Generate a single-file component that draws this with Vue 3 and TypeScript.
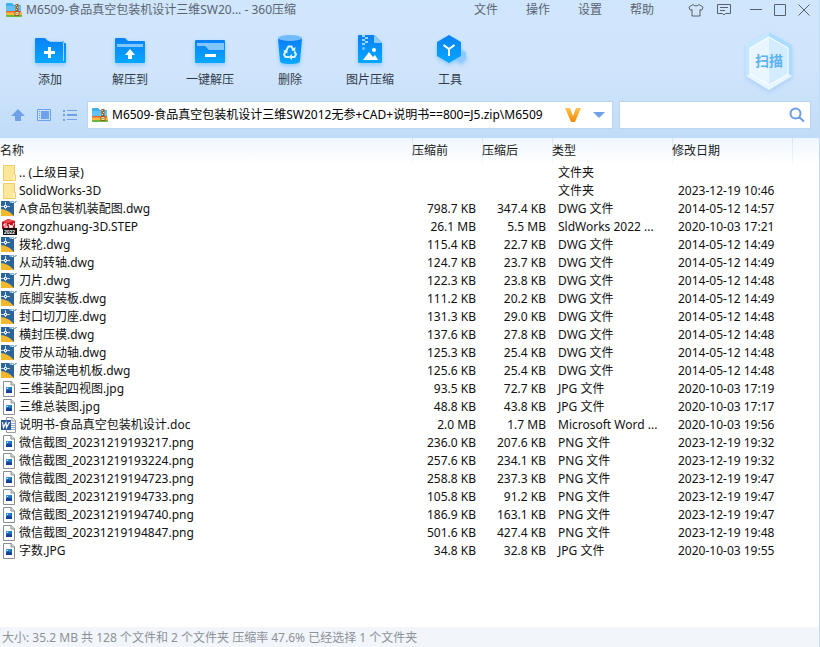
<script setup lang="ts">
import { ref } from 'vue'

type Kind = 'folder' | 'dwg' | 'step' | 'image' | 'doc'

interface Entry {
  name: string
  kind: Kind
  size: string
  packed: string
  type: string
  date: string
}

const row = (name: string, kind: Kind, size: string, packed: string, type: string, date: string): Entry =>
  ({ name, kind, size, packed, type, date })

const title = 'M6509-食品真空包装机设计三维SW20... - 360压缩'
const path = ref('M6509-食品真空包装机设计三维SW2012无参+CAD+说明书==800=J5.zip\\M6509')
const query = ref('')
const menus = ['文件', '操作', '设置', '帮助']
const tools = [
  { id: 'add', label: '添加' },
  { id: 'extract', label: '解压到' },
  { id: 'quick', label: '一键解压' },
  { id: 'delete', label: '删除' },
  { id: 'picture', label: '图片压缩' },
  { id: 'tools', label: '工具' },
]

const entries: Entry[] = [
  row('.. (上级目录)', 'folder', '', '', '文件夹', ''),
  row('SolidWorks-3D', 'folder', '', '', '文件夹', '2023-12-19 10:46'),
  row('A食品包装机装配图.dwg', 'dwg', '798.7 KB', '347.4 KB', 'DWG 文件', '2014-05-12 14:57'),
  row('zongzhuang-3D.STEP', 'step', '26.1 MB', '5.5 MB', 'SldWorks 2022 ...', '2020-10-03 17:21'),
  row('拨轮.dwg', 'dwg', '115.4 KB', '22.7 KB', 'DWG 文件', '2014-05-12 14:49'),
  row('从动转轴.dwg', 'dwg', '124.7 KB', '23.7 KB', 'DWG 文件', '2014-05-12 14:49'),
  row('刀片.dwg', 'dwg', '122.3 KB', '23.8 KB', 'DWG 文件', '2014-05-12 14:48'),
  row('底脚安装板.dwg', 'dwg', '111.2 KB', '20.2 KB', 'DWG 文件', '2014-05-12 14:49'),
  row('封口切刀座.dwg', 'dwg', '131.3 KB', '29.0 KB', 'DWG 文件', '2014-05-12 14:48'),
  row('横封压模.dwg', 'dwg', '137.6 KB', '27.8 KB', 'DWG 文件', '2014-05-12 14:48'),
  row('皮带从动轴.dwg', 'dwg', '125.3 KB', '25.4 KB', 'DWG 文件', '2014-05-12 14:48'),
  row('皮带输送电机板.dwg', 'dwg', '125.6 KB', '25.4 KB', 'DWG 文件', '2014-05-12 14:48'),
  row('三维装配四视图.jpg', 'image', '93.5 KB', '72.7 KB', 'JPG 文件', '2020-10-03 17:19'),
  row('三维总装图.jpg', 'image', '48.8 KB', '43.8 KB', 'JPG 文件', '2020-10-03 17:17'),
  row('说明书-食品真空包装机设计.doc', 'doc', '2.0 MB', '1.7 MB', 'Microsoft Word ...', '2020-10-03 19:56'),
  row('微信截图_20231219193217.png', 'image', '236.0 KB', '207.6 KB', 'PNG 文件', '2023-12-19 19:32'),
  row('微信截图_20231219193224.png', 'image', '257.6 KB', '234.1 KB', 'PNG 文件', '2023-12-19 19:32'),
  row('微信截图_20231219194723.png', 'image', '258.8 KB', '237.3 KB', 'PNG 文件', '2023-12-19 19:47'),
  row('微信截图_20231219194733.png', 'image', '105.8 KB', '91.2 KB', 'PNG 文件', '2023-12-19 19:47'),
  row('微信截图_20231219194740.png', 'image', '186.9 KB', '163.1 KB', 'PNG 文件', '2023-12-19 19:47'),
  row('微信截图_20231219194847.png', 'image', '501.6 KB', '427.4 KB', 'PNG 文件', '2023-12-19 19:48'),
  row('字数.JPG', 'image', '34.8 KB', '32.8 KB', 'JPG 文件', '2020-10-03 19:55'),
]
</script>

<template>
  <div class="app">
    <!-- Gradients and the archive glyph shared by the icons -->
    <svg class="defs" width="0" height="0" aria-hidden="true">
      <defs>
        <linearGradient id="blue" x1="0" y1="0" x2="0" y2="1">
          <stop offset="0" stop-color="#0a80f5" />
          <stop offset="1" stop-color="#06a8ff" />
        </linearGradient>
        <linearGradient id="gold" x1="0" y1="0" x2="0" y2="1">
          <stop offset="0" stop-color="#fbc44c" />
          <stop offset="1" stop-color="#f28a08" />
        </linearGradient>
        <linearGradient id="thumb" x1="0" y1="0" x2="1" y2="1">
          <stop offset="0" stop-color="#35b0ee" />
          <stop offset="1" stop-color="#123f9c" />
        </linearGradient>
        <symbol id="archive" viewBox="0 0 16 14">
          <path d="M0 1q0-1 1-1h5l2 2h6q1 0 1 1v6H0z" fill="#3fb0ee" />
          <path d="M0 3h15v5H0z" fill="#62c2f4" />
          <path d="M0 8h15v2H0z" fill="#e8663f" />
          <path d="M0 9.500h16v2.500H0z" fill="#f6bb3a" />
          <path d="M0 12h16v1q0 1-1 1H1q-1 0-1-1z" fill="#6fb43c" />
          <path d="M9.500 1h3v12h-3z" fill="#a0622a" />
          <path d="M10 2h1v1h-1zm1 2h1v1h-1zm-1 2h1v1h-1z" fill="#f9d57c" />
          <path d="M9 8.500h4v4H9z" fill="#fbe9b8" stroke="#9a5a20" />
          <path d="M10.500 10h1v1h-1z" fill="#6d3a10" />
        </symbol>
      </defs>
    </svg>

    <header class="top">
      <div class="titlebar">
        <svg class="archive" aria-hidden="true"><use href="#archive" /></svg>
        <h1 class="title">{{ title }}</h1>
        <nav class="menus">
          <button v-for="m in menus" :key="m" type="button">{{ m }}</button>
        </nav>
        <div class="window-tools">
          <button type="button" aria-label="皮肤">
            <svg width="16" height="14" viewBox="0 0 16 14"><path d="M5 1.500.9 4.200l1.400 3L4 6.500V13h8V6.500l1.700.7 1.400-3L11 1.500C10 3.300 6 3.300 5 1.500z" /></svg>
          </button>
          <button type="button" aria-label="反馈">
            <svg width="14" height="12" viewBox="0 0 14 12"><path d="M.5.5h13v9H8.500L7 11 5.500 9.500h-5zM3 3.500h8M3 6.500h5" /></svg>
          </button>
        </div>
        <div class="window-controls">
          <button type="button" aria-label="最小化">
            <svg width="12" height="12" viewBox="0 0 12 12"><path d="M0 5.500h12" /></svg>
          </button>
          <button type="button" aria-label="最大化">
            <svg width="12" height="12" viewBox="0 0 12 12"><path d="M.5.5h11v11H.5z" /></svg>
          </button>
          <button type="button" aria-label="关闭">
            <svg width="12" height="12" viewBox="0 0 12 12"><path d="m.5.5 11 11m0-11-11 11" /></svg>
          </button>
        </div>
      </div>

      <div class="toolbar">
        <button v-for="t in tools" :key="t.id" type="button" class="tool">
          <svg width="32" height="30" viewBox="0 0 32 30" aria-hidden="true">
            <g v-if="t.id === 'add'">
              <path d="M1 4q0-1 1-1h9l3 3h15q1 0 1 1v1h1q1 0 1 1v18q0 1-1 1H2q-1 0-1-1z" fill="url(#blue)" />
              <path d="M15 6h13q2 0 2 2v18h-1V8q0-1-1-1H16z" fill="#9bd4ff" />
              <path d="M14 12h3v4h4v3h-4v4h-3v-4h-4v-3h4z" fill="#fff" />
            </g>
            <g v-else-if="t.id === 'extract'">
              <path d="M1 4q0-1 1-1h9l3 3h16q1 0 1 1v20q0 1-1 1H2q-1 0-1-1z" fill="url(#blue)" />
              <path d="M3 9h26v3H3z" fill="#82c8ff" />
              <path d="m16 14 5 6h-3v4h-4v-4h-3z" fill="#fff" />
            </g>
            <g v-else-if="t.id === 'quick'">
              <rect x="1" y="5" width="30" height="23" rx="1" fill="url(#blue)" />
              <path d="M3 8h27v7H15l-4-4H3z" fill="#80c6ff" />
              <path d="M11 19h11v3H11z" fill="#fff" />
            </g>
            <g v-else-if="t.id === 'delete'">
              <path d="M4 4h24l-2 22q0 3-10 3T6 26z" fill="url(#blue)" />
              <ellipse cx="16" cy="3" rx="12" ry="3" fill="#72bcfa" />
              <g fill="none" stroke="#d9f3ff" stroke-width="2">
                <path d="m12.500 15 2-3.500h3l2 3.500M20.500 16.500l1.500 3-1.500 2.500H17M15 22h-3.500L10 19.500l2-3.500" />
              </g>
              <path d="m21.500 12-.5 4.500-4-1.500zM18 19v6l-3.500-3zM9 16l4.500-2v4.500z" fill="#d9f3ff" />
            </g>
            <g v-else-if="t.id === 'picture'">
              <path d="M4 1q0-1 1-1h15l8 8v19q0 1-1 1H5q-1 0-1-1z" fill="url(#blue)" />
              <path d="M20 0v7q0 1 1 1h7z" fill="#8ccaff" />
              <path d="M8 0h3v2H8zm3 2h3v2h-3zM8 4h3v2H8zm3 2h3v2h-3zM8 8h3v2H8z" fill="#9bd4ff" />
              <circle cx="9.500" cy="13.500" r="1.500" fill="#67c3ff" />
              <circle cx="20" cy="15" r="2" fill="#fff" />
              <path d="m9 25 6-8 4 5 2-2 3 5z" fill="#fff" />
            </g>
            <g v-else>
              <path d="m28 15 4 2v7l-5 4-5-3z" fill="#8ccaff" />
              <path d="m15 0 12 7v14l-12 7L3 21V7z" fill="url(#blue)" />
              <path d="m9.500 10 5.500 4 5.500-4m-5.500 4v7" fill="none" stroke="#fff" stroke-width="2" />
            </g>
          </svg>
          <span>{{ t.label }}</span>
        </button>
        <button type="button" class="scan">
          <svg class="shield" viewBox="0 0 48 58" aria-hidden="true">
            <path d="m24 0 23 13v31L24 58 1 44V13z" fill="#d3edff" />
            <path d="m24 0 23 13v31l-4-2V16L24 5z" fill="#acdcff" />
            <path d="m1 44 4-2 19 11 19-11 4 2-23 14z" fill="#e6f5ff" />
            <path d="M1 13 24 0v5L5 16v26l-4 2z" fill="#c3e8ff" />
            <path d="M24 5 5 16v26l19 11z" fill="#eaf6ff" />
            <path d="m24 5 19 11v26L24 53z" fill="#d4ecff" />
            <path d="m24 5 19 11v26L24 53 5 42V16z" fill="none" stroke="#fff" />
          </svg>
          <span class="scan-label">扫描</span>
        </button>
      </div>

      <div class="location">
        <div class="nav-buttons">
          <button type="button" aria-label="上级目录">
            <svg width="14" height="14" viewBox="0 0 14 14"><path d="m7 1 7 7h-4v5H4V8H0z" fill="#6fa1e9" /></svg>
          </button>
          <button type="button" aria-label="预览">
            <svg width="14" height="12" viewBox="0 0 14 12"><path d="M.5.5h13v11H.5z" fill="none" stroke="#6fa1e9" /><path d="M2 2h1v1H2zm0 2h1v1H2zm0 2h1v1H2zm0 2h1v1H2zM4 2h8v8H4z" fill="#6fa1e9" /></svg>
          </button>
          <button type="button" aria-label="列表">
            <svg width="14" height="12" viewBox="0 0 14 12"><path d="M0 1h2v2H0zm4 0h10v1H4zM0 5h2v2H0zm4 0h10v2H4zM0 10h2v2H0zm4 0h10v1H4z" fill="#6fa1e9" /></svg>
          </button>
        </div>
        <div class="address">
          <svg class="archive" aria-hidden="true"><use href="#archive" /></svg>
          <input v-model="path" type="text" aria-label="路径" />
          <svg class="vip" width="16" height="16" viewBox="0 0 16 16" aria-hidden="true"><path d="M0 1h5l3 8 3-8h5l-6 14H6z" fill="url(#gold)" /></svg>
          <button type="button" aria-label="历史路径">
            <svg width="12" height="6" viewBox="0 0 12 6"><path d="M0 0h12L6 6z" fill="#6fa1e9" /></svg>
          </button>
        </div>
        <div class="search">
          <input v-model="query" type="search" aria-label="搜索" />
          <button type="button" aria-label="搜索">
            <svg width="16" height="16" viewBox="0 0 16 16"><path d="M11.500 6.500a5 5 0 1 1-10 0 5 5 0 0 1 10 0zM10 10l5 4.500" fill="none" stroke="#6f9fe3" stroke-width="2" /></svg>
          </button>
        </div>
      </div>
    </header>

    <main class="files">
      <table>
        <colgroup>
          <col />
          <col class="c-size" />
          <col class="c-size" />
          <col class="c-wide" />
          <col class="c-wide" />
          <col class="c-rest" />
        </colgroup>
        <thead>
          <tr>
            <th>名称</th>
            <th>压缩前</th>
            <th>压缩后</th>
            <th>类型</th>
            <th>修改日期</th>
            <td></td>
          </tr>
        </thead>
        <tbody>
          <tr v-for="e in entries" :key="e.name">
            <td class="name">
              <div class="file">
                <svg width="17" height="16" viewBox="0 0 17 16" aria-hidden="true">
                  <g v-if="e.kind === 'folder'">
                    <path d="M3 0h11q1 0 1 1v14q0 1-1 1H3z" fill="#ffe699" />
                    <path d="M3.500.5h11v9h1v6h-12z" fill="none" stroke="#f2cd62" />
                    <path d="M13 10h2v5h-2z" fill="#fff2c4" />
                  </g>
                  <g v-else-if="e.kind === 'dwg'">
                    <path d="M1 0h13v15H1z" fill="#2d659b" />
                    <path d="M1 8q8 1 13 7H1z" fill="#f5b82c" />
                    <path d="M1 5.500h9M5.500 1v7" stroke="#c5dcf0" />
                    <path d="M4.500 4.500h2v2h-2z" fill="#2d659b" stroke="#fff" />
                    <path d="M9 0h8v1h-1v1h-6z" fill="#8db3d6" />
                    <path d="M12 1h1v1h-1zm2-1h1v1h-1z" fill="#fff" />
                  </g>
                  <g v-else-if="e.kind === 'step'">
                    <path d="m2 3 6-3 7 2v8l-7 3-6-3z" fill="#c50f18" />
                    <path d="m2 3 6-3 7 2-7 2z" fill="#e84b4d" />
                    <path d="M7 5H4v2h3v2H4m5-4 1 4 1-3 1 3 2-5" fill="none" stroke="#fff" />
                    <path d="M3 9h14v7H3z" fill="#111" />
                    <text x="4" y="15" class="badge">2022</text>
                  </g>
                  <g v-else-if="e.kind === 'image'">
                    <path d="M3.500.5h8l3 3v12h-11z" fill="#fff" stroke="#8a8f94" />
                    <path d="M11 0v4h4" fill="#ddd" stroke="#8a8f94" />
                    <path d="M6 6h6v6H6z" fill="url(#thumb)" />
                    <path d="m6 10 2-2 2 2 1-1 1 1v2H6z" fill="#123f9c" />
                    <path d="M7 7h1v1H7z" fill="#d8f5ff" />
                  </g>
                  <g v-else>
                    <path d="M6.500.5h6l3 3v12h-9z" fill="#fff" stroke="#9a9fa5" />
                    <path d="M12 0v4h4" fill="none" stroke="#9a9fa5" />
                    <path d="M11 6.500h4m-4 2h4m-4 2h4m-4 2h4" stroke="#8faad2" />
                    <path d="M1 3h10v10H1z" fill="#285797" />
                    <path d="m2.500 5 1 5.500L6 5.500l.5 5L9.500 5" fill="none" stroke="#fff" stroke-width="1.200" />
                  </g>
                </svg>
                <span>{{ e.name }}</span>
              </div>
            </td>
            <td class="num">{{ e.size }}</td>
            <td class="num">{{ e.packed }}</td>
            <td>{{ e.type }}</td>
            <td>{{ e.date }}</td>
            <td></td>
          </tr>
        </tbody>
      </table>
    </main>

    <footer class="status">大小: 35.2 MB 共 128 个文件和 2 个文件夹 压缩率 47.6% 已经选择 1 个文件夹</footer>
  </div>
</template>

<style>
body {
  margin: 0;
}
</style>

<style scoped>
.app {
  display: flex;
  flex-direction: column;
  box-sizing: border-box;
  min-height: 100vh;
  border-right: 1px solid #c3dcf6;
  background: #fff;
  color: #111;
  font: 12px/18px 'Noto Sans', 'Noto Sans CJK SC', sans-serif;
}

.defs {
  position: absolute;
}

button {
  display: flex;
  align-items: center;
  justify-content: center;
  margin: 0;
  padding: 0;
  border: 0;
  background: none;
  color: inherit;
  font: inherit;
}

input {
  flex: 1;
  min-width: 0;
  padding: 0;
  border: 0;
  outline: 0;
  background: none;
  color: #000;
  font: inherit;
}

.archive {
  flex: none;
  width: 16px;
  height: 14px;
}

.top {
  display: flex;
  flex-direction: column;
  box-sizing: border-box;
  height: 138px;
  background: linear-gradient(#d0e6fd, #d0e5fc 50%, #c1dcf8);
}

.titlebar {
  display: flex;
  align-items: center;
  height: 20px;
  padding: 0 9px 0 6px;
  color: #5a6470;
}

.title {
  flex: 1;
  margin: 0 0 0 4px;
  font-size: 12px;
  font-weight: 400;
  line-height: 20px;
  white-space: nowrap;
}

.menus {
  display: flex;
  gap: 28px;
}

.window-tools,
.window-controls {
  display: flex;
  align-items: center;
}

.window-tools {
  gap: 13px;
  margin: 0 19px 0 34px;
}

.window-controls {
  gap: 12px;
}

.titlebar button svg {
  fill: none;
  stroke: #56616d;
}

.toolbar {
  display: flex;
  align-items: flex-start;
  padding: 15px 26px 0 10px;
  color: #303b48;
}

.tool {
  flex-direction: column;
  gap: 6px;
  width: 80px;
}

.tool svg {
  overflow: visible;
  filter: drop-shadow(0 2px 2px #8ec8f8);
}

.scan {
  display: grid;
  margin: -3px 0 0 auto;
  color: #5db2f0;
  font-size: 14px;
  font-weight: 700;
}

.scan > * {
  grid-area: 1 / 1;
  place-self: center;
}

.scan-label {
  z-index: 1;
}

.shield {
  width: 48px;
  height: 58px;
  filter: drop-shadow(0 2px 2px #a9cff3);
}

.location {
  display: flex;
  height: 28px;
  margin-top: auto;
  padding: 0 8px 9px 11px;
}

.nav-buttons {
  display: flex;
  align-items: center;
  gap: 12px;
  margin-right: 10px;
}

.address,
.search {
  display: flex;
  align-items: center;
  box-sizing: border-box;
  background: #fff;
  outline: 1px solid #b8d5f2;
  outline-offset: -1px;
}

.address {
  flex: 1;
  gap: 4px;
  padding: 0 8px 0 5px;
}

.address .vip {
  margin-right: 8px;
}

.search {
  width: 24%;
  margin-left: 6px;
  padding: 0 6px;
}

.files {
  flex: 1;
}

table {
  width: 100%;
  border-collapse: separate;
  border-spacing: 0;
  table-layout: fixed;
}

.c-size {
  width: 70px;
}

.c-wide {
  width: 120px;
}

.c-rest {
  width: 27px;
}

thead tr {
  background: linear-gradient(#eff6fd, #fff);
}

th,
thead td {
  height: 26px;
  padding: 0;
  color: #1a1a1a;
  font-weight: 400;
  line-height: 16px;
  text-align: left;
}

th + th,
thead td {
  background: linear-gradient(#d5e7f9, #f4f9fe) no-repeat left / 1px 100%;
}

tbody td {
  height: 18px;
  padding: 0 6px;
  white-space: nowrap;
}

tbody td.name {
  padding: 0;
}

.file {
  display: flex;
  align-items: center;
  gap: 2px;
  height: 18px;
}

.num {
  text-align: right;
}

.badge {
  fill: #fff;
  font: 700 5px 'Liberation Sans', sans-serif;
}

.status {
  padding: 2px 2px 0;
  background: #f2f5fa;
  color: #8d9299;
}
</style>
